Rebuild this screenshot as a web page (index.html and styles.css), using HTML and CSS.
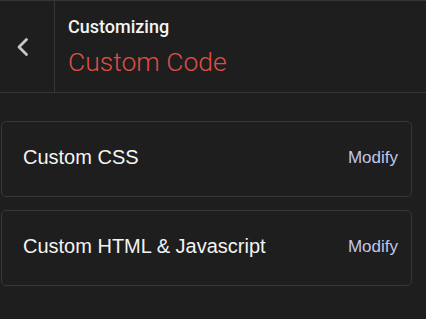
FILE: index.html
```html
<!DOCTYPE html>
<html>
<head>
<meta charset="utf-8">
<link rel="stylesheet" href="styles.css">
</head>
<body>
<header class="header">
  <button class="back" aria-label="Back">
    <svg width="16" height="22" viewBox="0 0 16 22"><path d="M11.5 3.5 L4 11 L11.5 18.5" fill="none" stroke="#c8c8c8" stroke-width="2.8" stroke-linecap="round" stroke-linejoin="round"/></svg>
  </button>
  <div class="titles">
    <div class="eyebrow">Customizing</div>
    <div class="title">Custom Code</div>
  </div>
</header>
<main class="list">
  <div class="card">
    <span class="card-label">Custom CSS</span>
    <a class="modify">Modify</a>
  </div>
  <div class="card">
    <span class="card-label">Custom HTML &amp; Javascript</span>
    <a class="modify">Modify</a>
  </div>
</main>
</body>
</html>
```
FILE: styles.css
```css
html, body {
  margin: 0;
  padding: 0;
  background: #1e1e1e;
  height: 100%;
}
body {
  font-family: "Liberation Sans", Arial, sans-serif;
  color: #f2f2f2;
}
.header {
  display: flex;
  height: 91px;
  border-top: 1px solid #353535;
  border-bottom: 1px solid #353535;
}
.back {
  width: 55px;
  flex: none;
  background: none;
  border: none;
  border-right: 1px solid #353535;
  padding: 0;
  display: flex;
  align-items: center;
  justify-content: center;
  cursor: pointer;
}
.back svg { margin-left: -9px; margin-top: 1px; }
.titles {
  padding-left: 13px;
  padding-top: 14px;
  font-family: Roboto, sans-serif;
}
.eyebrow {
  font-size: 18px;
  font-weight: 500;
  color: #f4f4f4;
  line-height: 24px;
}
.title {
  font-size: 26.5px;
  font-weight: 300;
  color: #dd4e47;
  line-height: 34px;
  margin-top: 6px;
}
.list {
  padding: 28px 14px 0 1px;
  display: flex;
  flex-direction: column;
  gap: 13px;
}
.card {
  height: 74px;
  border: 1px solid #373737;
  border-radius: 5px;
  display: flex;
  align-items: center;
  justify-content: space-between;
  padding: 0 13px 0 21px;
}
.card-label {
  font-size: 20px;
  color: #f4f4f4;
  margin-top: -3px;
}
.modify {
  font-size: 17px;
  color: #c3c5e8;
  margin-top: -3px;
}
```
